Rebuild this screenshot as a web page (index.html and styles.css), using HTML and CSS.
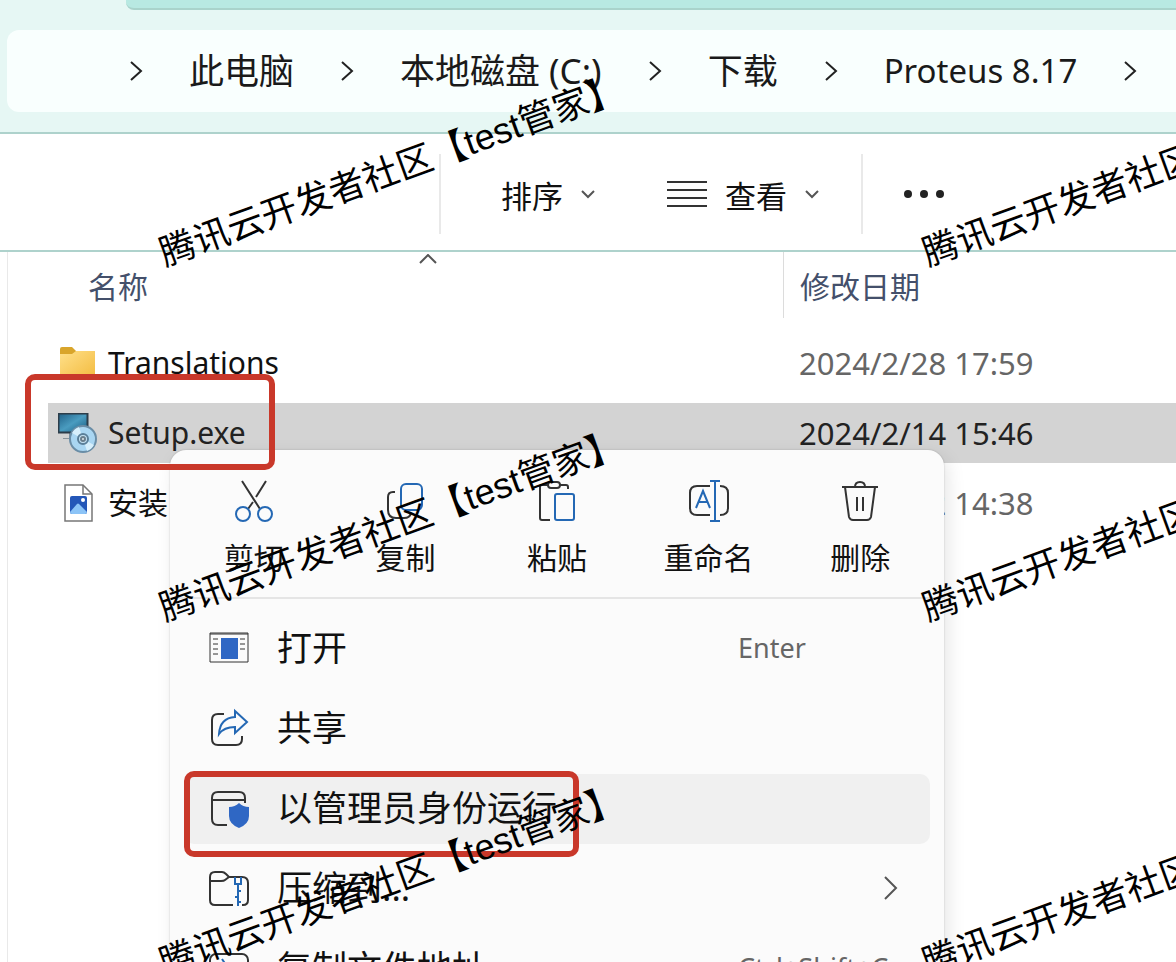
FILE: index.html
```html
<!DOCTYPE html>
<html lang="zh-CN">
<head>
    <meta charset="UTF-8">
    <meta name="viewport" content="width=device-width, initial-scale=1.0">
    <title>Proteus 8.17</title>
    <link rel="stylesheet" href="styles.css">
</head>
<body>
    <div class="window">
        <header class="titlebar">
            <div class="tab"></div>
            <nav class="address">
                <svg class="chevron" viewBox="0 0 14 22"><path d="M2 2l10 9-10 9"/></svg>
                <a href="#">此电脑</a>
                <svg class="chevron" viewBox="0 0 14 22"><path d="M2 2l10 9-10 9"/></svg>
                <a href="#">本地磁盘 (C:)</a>
                <svg class="chevron" viewBox="0 0 14 22"><path d="M2 2l10 9-10 9"/></svg>
                <a href="#">下载</a>
                <svg class="chevron" viewBox="0 0 14 22"><path d="M2 2l10 9-10 9"/></svg>
                <a class="latin" href="#">Proteus 8.17</a>
                <svg class="chevron" viewBox="0 0 14 22"><path d="M2 2l10 9-10 9"/></svg>
            </nav>
        </header>

        <div class="toolbar">
            <div class="toolbar-group">
                <button class="tool">排序
                    <svg class="caret" viewBox="0 0 14 10"><path d="M1 2l6 6 6-6"/></svg>
                </button>
                <button class="tool">
                    <svg class="lines" viewBox="0 0 40 28"><path d="M0 2h40M0 10h40M0 18h40M0 26h40"/></svg>
                    查看
                    <svg class="caret" viewBox="0 0 14 10"><path d="M1 2l6 6 6-6"/></svg>
                </button>
            </div>
            <button class="more" aria-label="更多">
                <svg viewBox="0 0 42 10"><circle cx="5" cy="5" r="4"/><circle cx="21" cy="5" r="4"/><circle cx="37" cy="5" r="4"/></svg>
            </button>
        </div>

        <main class="files">
            <table class="file-table">
                <thead>
                    <tr>
                        <th class="col-name">
                            <div class="head">名称
                                <svg class="sort" viewBox="0 0 18 10"><path d="M1 9l8-8 8 8"/></svg>
                            </div>
                        </th>
                        <th class="col-date"><div class="head">修改日期</div></th>
                    </tr>
                </thead>
                <tbody>
                    <tr>
                        <td>
                            <div class="name">
                                <svg class="file-icon" viewBox="0 0 40 40">
                                    <defs>
                                        <linearGradient id="folder" x1="0" y1="0" x2="1" y2="1">
                                            <stop offset="0" stop-color="#ffe08a"/>
                                            <stop offset="1" stop-color="#f3bb3f"/>
                                        </linearGradient>
                                    </defs>
                                    <path fill="#d9a52b" d="M2 6q0-2 2-2h10l4 4h18q1 0 1 2v8H2z"/>
                                    <path fill="url(#folder)" d="M2 11h12l4-3h18q1 0 1 1v24q0 2-2 2H4q-2 0-2-2z"/>
                                </svg>
                                Translations
                            </div>
                        </td>
                        <td>2024/2/28 17:59</td>
                    </tr>
                    <tr class="selected">
                        <td>
                            <div class="name">
                                <svg class="file-icon" viewBox="0 0 40 40">
                                    <defs>
                                        <linearGradient id="screen" x1="0" y1="0" x2="1" y2="1">
                                            <stop offset="0" stop-color="#1f5f86"/>
                                            <stop offset=".5" stop-color="#4a9cc0"/>
                                            <stop offset="1" stop-color="#17597f"/>
                                        </linearGradient>
                                    </defs>
                                    <path fill="#8a949b" d="M11 20h8v5h-8zM5 25h16v1H5z"/>
                                    <path fill="url(#screen)" stroke="#2c3d4a" d="M.5.5h29v19H.5z"/>
                                    <circle cx="25" cy="26" r="13" fill="#a9d6f2" stroke="#6a8da6"/>
                                    <path fill="#d6effc" d="M25 26L14 20a13 13 0 0 1 7-6zM25 26l11 6a13 13 0 0 1-7 6z"/>
                                    <circle cx="25" cy="26" r="5" fill="#c6e4f5" stroke="#5a7f99"/>
                                    <circle cx="25" cy="26" r="2" fill="#dfe6ea" stroke="#6a7f8d"/>
                                </svg>
                                Setup.exe
                            </div>
                            <span class="mark mark-file"></span>
                        </td>
                        <td>2024/2/14 15:46</td>
                    </tr>
                    <tr>
                        <td>
                            <div class="name">
                                <svg class="file-icon" viewBox="0 0 40 40">
                                    <path fill="#fff" stroke="#777" stroke-width="1.500" d="M7 2h18l9 9v27H7z"/>
                                    <path fill="none" stroke="#777" stroke-width="1.500" d="M25 2v9h9"/>
                                    <rect x="12" y="13" width="17" height="18" rx="2" fill="#2457b8"/>
                                    <path fill="#8cc4f7" d="M12 29l7-8q1-1 2 0l8 8q0 2-2 2H14q-2 0-2-2z"/>
                                    <circle cx="25" cy="17" r="2" fill="#fff"/>
                                </svg>
                                安装
                            </div>
                        </td>
                        <td>2024/2/22 14:38</td>
                    </tr>
                </tbody>
            </table>
        </main>

        <div class="menu">
            <div class="actions">
                <button class="action">
                    <svg viewBox="0 0 42 42">
                        <path d="M9 1l18 28M33 1L23 17M20 22l-5 7"/>
                        <g class="blue"><circle cx="10" cy="34" r="7"/><circle cx="32" cy="34" r="7"/></g>
                    </svg>
                    剪切
                </button>
                <button class="action">
                    <svg viewBox="0 0 42 42">
                        <path d="M11 12H9q-5 0-5 5v13q0 8 8 8h8q6 0 7-5"/>
                        <rect class="blue" x="17" y="4" width="21" height="26" rx="5"/>
                    </svg>
                    复制
                </button>
                <button class="action">
                    <svg viewBox="0 0 42 42">
                        <path d="M14 40H6q-2 0-2-2V7q0-2 2-2h6M24 5h6q2 0 2 2v2"/>
                        <rect x="12" y="2" width="12" height="6" rx="3"/>
                        <rect class="blue" x="19" y="14" width="19" height="26" rx="2"/>
                    </svg>
                    粘贴
                </button>
                <button class="action">
                    <svg viewBox="0 0 42 42">
                        <path d="M22 6H9q-7 0-7 7v15q0 7 7 7h13M32 6q8 0 8 7v15q0 7-8 7"/>
                        <path class="blue" d="M22 1h10M22 41h10M27 1v40M8 28l7-17 7 17M11 22h8"/>
                    </svg>
                    重命名
                </button>
                <button class="action">
                    <svg viewBox="0 0 42 42">
                        <path d="M3 7h36M6 7l4 30q1 3 4 3h14q3 0 4-3l4-30M16 7q0-5 5-5t5 5M18 17v14M24 17v14"/>
                    </svg>
                    删除
                </button>
            </div>

            <div class="items">
                <button class="item">
                    <svg viewBox="0 0 40 40">
                        <path class="thin" d="M1 5h38v29H1zM1 6h38M4 11h5M4 16h5M4 21h5M4 26h5M31 11h5M31 16h5M31 21h5"/>
                        <path class="fill" d="M12 10h17v21H12z"/>
                    </svg>
                    <span>打开</span>
                    <span class="shortcut">Enter</span>
                </button>
                <button class="item">
                    <svg viewBox="0 0 40 40">
                        <path d="M15 6H9q-6 0-6 6v19q0 6 6 6h18q6 0 6-6v-3"/>
                        <path class="blue" d="M26 3l12 11-12 11v-6q-11 0-16 7 1-16 16-17z"/>
                    </svg>
                    <span>共享</span>
                </button>
                <button class="item active">
                    <svg viewBox="0 0 40 40">
                        <path d="M18 37H9q-6 0-6-6V10q0-6 6-6h21q6 0 6 6v5M3 12h33"/>
                        <path class="fill" d="M30 15q4 4 10 4v9q0 8-10 12-10-4-10-12v-9q6 0 10-4z"/>
                    </svg>
                    <span>以管理员身份运行</span>
                    <span class="mark mark-item"></span>
                </button>
                <button class="item">
                    <svg viewBox="0 0 40 40">
                        <path d="M24 37H6q-5 0-5-5V9q0-5 5-5h7q2 0 4 2l3 3h13q6 0 6 6v17q0 5-5 5h-1M1 13h11q3 0 4-1l4-3"/>
                        <path class="blue" d="M26 9v7h6V9M29 16v22M29 23h3M29 29h-3M29 34h3"/>
                    </svg>
                    <span>压缩到...</span>
                    <svg class="submenu" viewBox="0 0 14 24"><path d="M1 1l11 11L1 23"/></svg>
                </button>
                <button class="item">
                    <svg viewBox="0 0 40 40">
                        <rect x="1" y="6" width="38" height="28" rx="6"/>
                        <path class="blue" d="M13 11l4 6M13 17h14"/>
                    </svg>
                    <span>复制文件地址</span>
                    <span class="shortcut">Ctrl+Shift+C</span>
                </button>
            </div>
        </div>

        <div class="watermarks">
            <span>腾讯云开发者社区【test管家】</span>
            <span>腾讯云开发者社区【test管家】</span>
            <span>腾讯云开发者社区【test管家】</span>
            <span>腾讯云开发者社区【test管家】</span>
            <span>腾讯云开发者社区【test管家】</span>
            <span>腾讯云开发者社区【test管家】</span>
        </div>
    </div>
</body>
</html>
```
FILE: styles.css
```css
* {
    box-sizing: border-box;
}

body {
    margin: 0;
    background-color: #fff;
    color: #111;
    font-family: "Noto Sans", "Noto Sans CJK SC", sans-serif;
    font-size: 30px;
}

button {
    border: none;
    background: none;
    padding: 0;
    color: inherit;
    font: inherit;
}

svg {
    flex: none;
    fill: none;
    stroke: #333;
    stroke-width: 2;
}

.window {
    position: relative;
    height: 100vh;
    overflow: hidden;
}

/* title bar and address */
.titlebar {
    background-color: #e6f7f4;
    border-bottom: 2px solid #aed2cc;
    padding-bottom: 20px;
}

.tab {
    height: 10px;
    margin-left: 126px;
    background-color: #b8e9e2;
    border-bottom: 2px solid #a9d3cb;
    border-bottom-left-radius: 8px;
}

.address {
    display: flex;
    align-items: center;
    gap: 46px;
    height: 82px;
    margin: 20px 0 0 7px;
    padding-left: 122px;
    background-color: #f9fffe;
    border-radius: 12px 0 0 12px;
    font-size: 35px;
    line-height: 48px;
    white-space: nowrap;
}

.address a {
    color: #1a1a1a;
    text-decoration: none;
}

.address .latin {
    font-size: 33px;
}

.chevron {
    width: 14px;
    height: 22px;
    stroke: #222;
}

/* toolbar */
.toolbar {
    display: flex;
    align-items: center;
    height: 118px;
    padding-top: 4px;
    border-bottom: 2px solid #aed2cc;
}

.toolbar-group {
    display: flex;
    align-items: center;
    gap: 72px;
    height: 80px;
    margin-left: 439px;
    padding: 0 42px 0 60px;
    border-left: 2px solid #e9e9e9;
    border-right: 2px solid #e9e9e9;
    font-size: 31px;
}

.tool {
    display: flex;
    align-items: center;
    gap: 18px;
}

.caret {
    width: 14px;
    height: 10px;
    stroke: #555;
}

.lines {
    width: 40px;
    height: 28px;
}

.more {
    display: flex;
    margin-left: 40px;
}

.more svg {
    width: 42px;
    height: 10px;
    fill: #222;
    stroke: none;
}

/* file list */
.files {
    margin-left: 7px;
    padding-left: 40px;
    border-left: 1px solid #e9e9e9;
    height: 100vh;
}

.file-table {
    width: 100%;
    table-layout: fixed;
    border-collapse: separate;
    border-spacing: 0;
}

th {
    height: 76px;
    padding: 0;
    vertical-align: top;
    text-align: left;
    font-weight: normal;
    color: #44506b;
}

.col-name {
    width: 735px;
    padding-left: 24px;
}

.head {
    position: relative;
    display: flex;
    align-items: center;
    height: 66px;
    padding-left: 16px;
}

.col-date .head {
    border-left: 1px solid #dcdcdc;
}

.sort {
    position: absolute;
    top: 2px;
    left: 50%;
    width: 18px;
    height: 10px;
    margin-left: -9px;
    stroke: #555;
}

td {
    position: relative;
    height: 70px;
    padding: 0 0 0 16px;
    border: solid transparent;
    border-width: 5px 0;
    background-clip: padding-box;
    color: #666;
    font-size: 31px;
    line-height: 42px;
}

td:first-child {
    padding-left: 10px;
    color: #111;
    font-size: 30px;
    line-height: 44px;
}

.selected td {
    background-color: #d3d3d3;
    color: #222;
}

.name {
    display: flex;
    align-items: center;
    gap: 10px;
}

.file-icon {
    width: 40px;
    height: 40px;
    stroke: none;
}

.mark {
    position: absolute;
    z-index: 2;
    border: 6px solid #c9382a;
    border-radius: 10px;
}

.mark-file {
    top: -29px;
    left: -23px;
    width: 250px;
    height: 96px;
}

.mark-item {
    top: -3px;
    left: 0;
    width: 395px;
    height: 86px;
}

/* context menu */
.menu {
    position: absolute;
    z-index: 1;
    top: 450px;
    left: 170px;
    width: 774px;
    background-color: #fbfbfb;
    border-radius: 16px;
    box-shadow: 0 0 2px rgba(0, 0, 0, 0.2), 4px 6px 18px rgba(0, 0, 0, 0.1);
}

.actions {
    display: flex;
    height: 149px;
    padding: 30px 8px 0;
    border-bottom: 2px solid #e5e5e5;
}

.action {
    display: flex;
    flex: 1;
    flex-direction: column;
    align-items: center;
    gap: 14px;
    line-height: 44px;
}

.action svg {
    width: 42px;
    height: 42px;
}

.items {
    display: flex;
    flex-direction: column;
    gap: 10px;
    padding: 15px 14px;
}

.item {
    position: relative;
    display: grid;
    grid-template-columns: 40px 1fr 168px;
    align-items: center;
    column-gap: 28px;
    height: 70px;
    padding: 0 24px 2px 25px;
    border-radius: 10px;
    font-size: 35px;
    line-height: 48px;
    text-align: left;
    white-space: nowrap;
}

.item svg {
    width: 40px;
    height: 40px;
}

.active {
    background-color: #f0f0f0;
}

.shortcut {
    color: #666;
    font-size: 27px;
}

.item .submenu {
    justify-self: end;
    width: 14px;
    height: 24px;
    margin-right: 8px;
    stroke: #555;
}

.menu .blue {
    stroke: #2468b4;
}

.menu .fill {
    fill: #2f67c4;
    stroke: none;
}

.menu .thin {
    stroke-width: 1;
}

/* watermark layer */
.watermarks {
    position: absolute;
    z-index: 3;
    top: 229px;
    left: 161px;
    display: grid;
    grid-template-columns: 763px 763px;
    grid-auto-rows: 355px;
    color: #000;
    font-family: "Liberation Sans", "Noto Sans CJK SC", sans-serif;
    font-size: 36px;
    line-height: 52px;
    white-space: nowrap;
    pointer-events: none;
}

.watermarks span {
    height: 52px;
    transform: rotate(-20deg);
    transform-origin: left center;
}
```
